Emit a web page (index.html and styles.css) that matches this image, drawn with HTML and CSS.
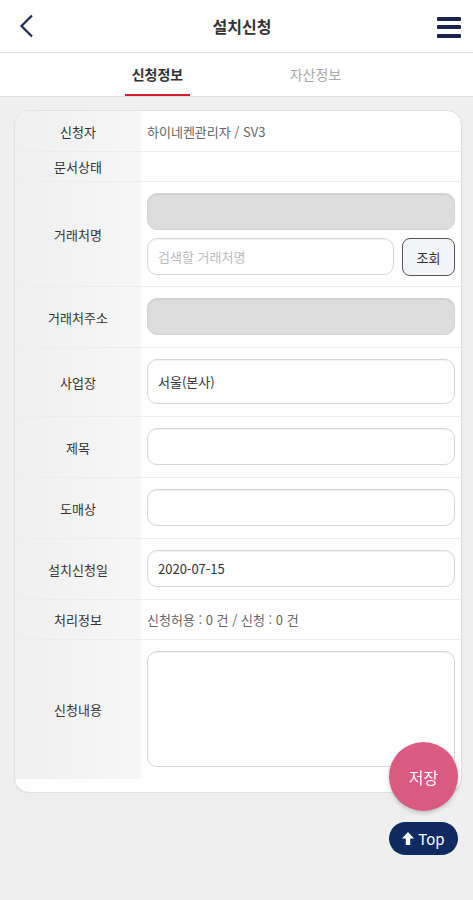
FILE: index.html
```html
<!DOCTYPE html>
<html lang="ko">
<head>
  <meta charset="UTF-8">
  <meta name="viewport" content="width=device-width, initial-scale=1.0">
  <title>설치신청</title>
  <link rel="stylesheet" href="styles.css">
</head>
<body>

  <!-- 상단 헤더 -->
  <div class="header">
    <a href="#" class="back">
      <svg width="16" height="24" viewBox="0 0 16 24"><polyline points="13,1.5 2.5,12 13,22.5" fill="none" stroke="#1b2a55" stroke-width="2.2"/></svg>
    </a>
    <h1>설치신청</h1>
    <a href="#" class="menu">
      <span></span><span></span><span></span>
    </a>
  </div>

  <!-- 탭 -->
  <div class="tabs">
    <a href="#" class="tab active"><span>신청정보</span></a>
    <a href="#" class="tab"><span>자산정보</span></a>
  </div>

  <!-- 신청 폼 -->
  <div class="card">
    <div class="row">
      <div class="label">신청자</div>
      <div class="value text">하이네켄관리자 / SV3</div>
    </div>
    <div class="row row-small">
      <div class="label">문서상태</div>
      <div class="value text"></div>
    </div>
    <div class="row">
      <div class="label">거래처명</div>
      <div class="value search-cell">
        <div class="input disabled"></div>
        <div class="search">
          <input type="text" class="input" placeholder="검색할 거래처명">
          <button class="btn-search">조회</button>
        </div>
      </div>
    </div>
    <div class="row">
      <div class="label">거래처주소</div>
      <div class="value"><div class="input disabled"></div></div>
    </div>
    <div class="row">
      <div class="label">사업장</div>
      <div class="value"><div class="input tall">서울(본사)</div></div>
    </div>
    <div class="row">
      <div class="label">제목</div>
      <div class="value"><input type="text" class="input"></div>
    </div>
    <div class="row">
      <div class="label">도매상</div>
      <div class="value"><input type="text" class="input"></div>
    </div>
    <div class="row">
      <div class="label">설치신청일</div>
      <div class="value"><input type="text" class="input" value="2020-07-15"></div>
    </div>
    <div class="row row-info">
      <div class="label">처리정보</div>
      <div class="value text">신청허용 : 0 건 / 신청 : 0 건</div>
    </div>
    <div class="row last">
      <div class="label">신청내용</div>
      <div class="value"><textarea class="input area"></textarea></div>
    </div>
  </div>

  <!-- 플로팅 버튼 -->
  <button class="fab">저장</button>
  <a href="#" class="top-btn">
    <svg width="12" height="13" viewBox="0 0 12 13"><path d="M6 0 L12 6.5 H8.2 V13 H3.8 V6.5 H0 Z" fill="#fff"/></svg>
    Top
  </a>

</body>
</html>
```

FILE: styles.css
```css
/* 기본 */
body {
  margin: 0;
  background: #efefef;
  font-family: "Noto Sans CJK KR", "Noto Sans", sans-serif;
  color: #333;
}

/* 헤더 */
.header {
  height: 52px;
  background: #fff;
  border-bottom: 1px solid #dcdcdc;
  display: flex;
  align-items: center;
  justify-content: space-between;
  padding: 0 12px 0 19px;
}

.header h1 {
  margin: 0;
  font-size: 16px;
  font-weight: bold;
  color: #333;
}

.back {
  display: flex;
  width: 28px;
}

.menu {
  width: 24px;
  display: flex;
  flex-direction: column;
  gap: 4.5px;
  margin-top: 2px;
}

.menu span {
  height: 4px;
  background: #1b2450;
  border-radius: 1px;
}

/* 탭 */
.tabs {
  height: 43px;
  background: #fff;
  border-bottom: 1px solid #dcdcdc;
  display: flex;
  justify-content: center;
}

.tab {
  width: 158px;
  display: flex;
  justify-content: center;
  text-decoration: none;
  font-size: 14px;
  color: #aaa;
}

.tab span {
  padding: 11px 7px 0;
  border-bottom: 2px solid transparent;
}

.tab.active {
  color: #333;
  font-weight: bold;
}

.tab.active span {
  border-bottom-color: #d0202e;
}

/* 카드 */
.card {
  margin: 13px 11px 0 14px;
  background: #fff;
  border: 1px solid #e0e0e0;
  border-radius: 15px;
  overflow: hidden;
  padding-bottom: 13px;
  box-shadow: 0 1px 2px rgba(0, 0, 0, 0.05);
}

.row {
  display: grid;
  grid-template-columns: 126px 1fr;
  border-bottom: 1px solid #ececec;
  min-height: 40px;
}

.row.last {
  border-bottom: none;
}

.label {
  background: linear-gradient(to right, #efefef, #f7f7f7);
  display: flex;
  align-items: center;
  justify-content: center;
  font-size: 13px;
  color: #333;
}

.value {
  padding: 11px 6px 12px;
  display: flex;
  flex-direction: column;
  justify-content: center;
  gap: 8px;
}

.value.search-cell {
  padding-bottom: 10px;
}

.value.text {
  padding: 0 6px;
  font-size: 13px;
  color: #666;
}

.row-small {
  min-height: 29px;
}

.row-info {
  min-height: 39px;
}

.input {
  box-sizing: border-box;
  height: 37px;
  width: 100%;
  border: 1px solid #d6d6d6;
  border-radius: 10px;
  background: #fff;
  padding: 0 10px;
  font-family: inherit;
  font-size: 13px;
  color: #333;
  display: flex;
  align-items: center;
  box-shadow: inset 0 1px 1px rgba(0, 0, 0, 0.06);
}

.input::placeholder {
  color: #bbb;
}

.input.disabled {
  background: #dcdcdc;
  border-color: #d2d2d2;
}

.input.tall {
  height: 45px;
}

.input.area {
  height: 116px;
  resize: none;
}

.search {
  display: flex;
  gap: 8px;
}

.btn-search {
  flex-shrink: 0;
  width: 53px;
  height: 38px;
  border: 1.5px solid #555;
  border-radius: 8px;
  background: #f2f4f7;
  font-family: inherit;
  font-size: 13px;
  color: #333;
}

/* 플로팅 버튼 */
.fab {
  position: fixed;
  right: 15px;
  bottom: 89px;
  width: 69px;
  height: 69px;
  border: none;
  border-radius: 50%;
  background: #d95a82;
  color: #fff;
  font-family: inherit;
  font-size: 16px;
  box-shadow: 0 2px 4px rgba(0, 0, 0, 0.2);
}

.top-btn {
  position: fixed;
  right: 15px;
  bottom: 45px;
  width: 69px;
  height: 33px;
  border-radius: 17px;
  background: #0e2a5e;
  color: #fff;
  text-decoration: none;
  font-size: 15px;
  display: flex;
  align-items: center;
  justify-content: center;
  gap: 4px;
}
```
